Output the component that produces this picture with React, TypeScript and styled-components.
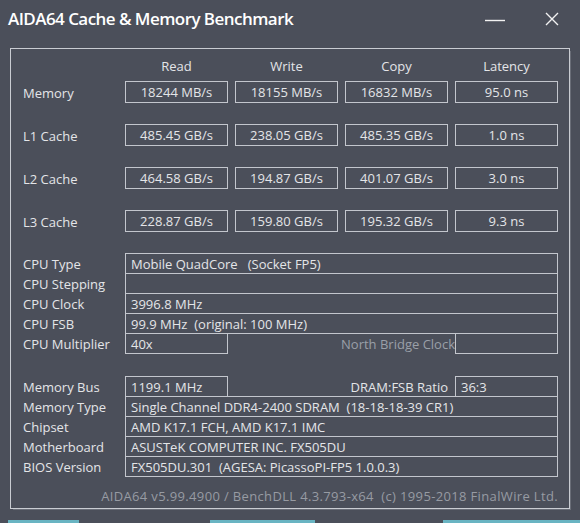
import React from "react";
import styled, { createGlobalStyle } from "styled-components";

const Global = createGlobalStyle`
  html, body { margin: 0; padding: 0; background: #4b4f5a; }
  body { font-family: "Open Sans", "Noto Sans", sans-serif; color: #e4e5e8; overflow: hidden; }
`;

const Window = styled.div`
  width: 580px;
  height: 523px;
  background: #4b4f5a;
  display: flex;
  flex-direction: column;
  overflow: hidden;
  & > * { flex: none; }
`;

const TitleBar = styled.div`
  height: 48px;
  display: flex;
  align-items: flex-start;
  justify-content: space-between;
  box-sizing: border-box;
  padding: 7px 0 0 8px;
`;

const Title = styled.div`
  font-size: 17px;
  font-weight: 600;
  color: #ffffff;
  letter-spacing: -0.55px;
`;

const Controls = styled.div`
  display: flex;
  align-items: center;
  gap: 40px;
  padding: 5px 21px 0 0;
`;

const Frame = styled.div`
  margin-left: 10px;
  width: 560px;
  height: 461px;
  box-sizing: border-box;
  border: 1px solid #c9ccd2;
  box-shadow: 2px 2px 0 -1px rgba(200, 204, 210, 0.25);
  padding: 8px 0 0 12px;
  display: flex;
  flex-direction: column;
`;

const cols = "95px repeat(4, 103px)";

const BenchGrid = styled.div`
  display: grid;
  grid-template-columns: ${cols};
  column-gap: 7px;
  grid-auto-rows: 22px;
  row-gap: 21px;
`;

const HeaderRow = styled.div`
  display: grid;
  grid-template-columns: ${cols};
  column-gap: 7px;
  height: 18px;
  margin-bottom: 6px;
`;

const HeadCell = styled.div`
  text-align: center;
  font-size: 13px;
  line-height: 18px;
`;

const Label = styled.div`
  font-size: 13px;
  line-height: 23px;
  white-space: nowrap;
`;

const RowLabel = styled(Label)`
  line-height: 24px;
`;

const ValueBox = styled.div`
  box-sizing: border-box;
  border: 1px solid #c3c6cd;
  font-size: 13px;
  line-height: 21px;
  text-align: center;
  white-space: nowrap;
`;

const InfoSection = styled.div<{ $top: number }>`
  margin-top: ${(p) => p.$top}px;
  display: flex;
  flex-direction: column;
`;

const InfoRow = styled.div`
  display: grid;
  grid-template-columns: 102px 103px 227px 103px;
  height: 21px;
  & + & { margin-top: -1px; }
`;

const InfoCell = styled.div<{ $span?: number }>`
  grid-column: span ${(p) => p.$span ?? 1};
  box-sizing: border-box;
  height: 21px;
  border: 1px solid #c3c6cd;
  padding-left: 5px;
  font-size: 13px;
  line-height: 20px;
  white-space: nowrap;
  overflow: hidden;
`;

const SideLabel = styled.div<{ $dim?: boolean }>`
  box-sizing: border-box;
  font-size: 13px;
  line-height: 23px;
  text-align: right;
  padding-right: ${(p) => (p.$dim ? 0 : 7)}px;
  color: ${(p) => (p.$dim ? "#9a9fa8" : "#e4e5e8")};
  white-space: nowrap;
`;

const Footer = styled.div`
  margin-top: auto;
  margin-bottom: 3px;
  padding-right: 11px;
  text-align: right;
  font-size: 13px;
  line-height: 18px;
  letter-spacing: 0.35px;
  color: #979ba3;
  white-space: nowrap;
`;

const ButtonRow = styled.div`
  margin-top: 11px;
  display: flex;
`;

const Button = styled.div<{ $left: number; $width: number }>`
  margin-left: ${(p) => p.$left}px;
  width: ${(p) => p.$width}px;
  height: 24px;
  background: #69b4c2;
  flex: none;
`;

const bench = [
  ["Memory", "18244 MB/s", "18155 MB/s", "16832 MB/s", "95.0 ns"],
  ["L1 Cache", "485.45 GB/s", "238.05 GB/s", "485.35 GB/s", "1.0 ns"],
  ["L2 Cache", "464.58 GB/s", "194.87 GB/s", "401.07 GB/s", "3.0 ns"],
  ["L3 Cache", "228.87 GB/s", "159.80 GB/s", "195.32 GB/s", "9.3 ns"],
];

const sp = "\u00a0\u00a0";

export default function App() {
  return (
    <Window>
      <Global />
      <TitleBar>
        <Title>AIDA64 Cache &amp; Memory Benchmark</Title>
        <Controls>
          <svg width="20" height="14" viewBox="0 0 20 14">
            <line x1="0" y1="8.5" x2="20" y2="8.5" stroke="#f2f2f2" strokeWidth="1.4" />
          </svg>
          <svg width="14" height="14" viewBox="0 0 14 14">
            <path d="M1 1 L13 13 M13 1 L1 13" stroke="#f2f2f2" strokeWidth="1.4" />
          </svg>
        </Controls>
      </TitleBar>
      <Frame>
        <HeaderRow>
          <span />
          <HeadCell>Read</HeadCell>
          <HeadCell>Write</HeadCell>
          <HeadCell>Copy</HeadCell>
          <HeadCell>Latency</HeadCell>
        </HeaderRow>
        <BenchGrid>
          {bench.map((r) => (
            <React.Fragment key={r[0]}>
              <RowLabel>{r[0]}</RowLabel>
              {r.slice(1).map((v, i) => (
                <ValueBox key={i}>{v}</ValueBox>
              ))}
            </React.Fragment>
          ))}
        </BenchGrid>

        <InfoSection $top={21}>
          <InfoRow>
            <Label>CPU Type</Label>
            <InfoCell $span={3}>Mobile QuadCore{"\u00a0\u00a0\u00a0"}(Socket FP5)</InfoCell>
          </InfoRow>
          <InfoRow>
            <Label>CPU Stepping</Label>
            <InfoCell $span={3} />
          </InfoRow>
          <InfoRow>
            <Label>CPU Clock</Label>
            <InfoCell $span={3}>3996.8 MHz</InfoCell>
          </InfoRow>
          <InfoRow>
            <Label>CPU FSB</Label>
            <InfoCell $span={3}>99.9 MHz{sp}(original: 100 MHz)</InfoCell>
          </InfoRow>
          <InfoRow>
            <Label>CPU Multiplier</Label>
            <InfoCell>40x</InfoCell>
            <SideLabel $dim>North Bridge Clock</SideLabel>
            <InfoCell />
          </InfoRow>
        </InfoSection>

        <InfoSection $top={22}>
          <InfoRow>
            <Label>Memory Bus</Label>
            <InfoCell>1199.1 MHz</InfoCell>
            <SideLabel>DRAM:FSB Ratio</SideLabel>
            <InfoCell>36:3</InfoCell>
          </InfoRow>
          <InfoRow>
            <Label>Memory Type</Label>
            <InfoCell $span={3}>Single Channel DDR4-2400 SDRAM{sp}(18-18-18-39 CR1)</InfoCell>
          </InfoRow>
          <InfoRow>
            <Label>Chipset</Label>
            <InfoCell $span={3}>AMD K17.1 FCH, AMD K17.1 IMC</InfoCell>
          </InfoRow>
          <InfoRow>
            <Label>Motherboard</Label>
            <InfoCell $span={3}>ASUSTeK COMPUTER INC. FX505DU</InfoCell>
          </InfoRow>
          <InfoRow>
            <Label>BIOS Version</Label>
            <InfoCell $span={3}>FX505DU.301{sp}(AGESA: PicassoPI-FP5 1.0.0.3)</InfoCell>
          </InfoRow>
        </InfoSection>

        <Footer>AIDA64 v5.99.4900 / BenchDLL 4.3.793-x64{sp}(c) 1995-2018 FinalWire Ltd.</Footer>
      </Frame>
      <ButtonRow>
        <Button $left={8} $width={71} />
        <Button $left={131} $width={105} />
        <Button $left={128} $width={140} />
      </ButtonRow>
    </Window>
  );
}
